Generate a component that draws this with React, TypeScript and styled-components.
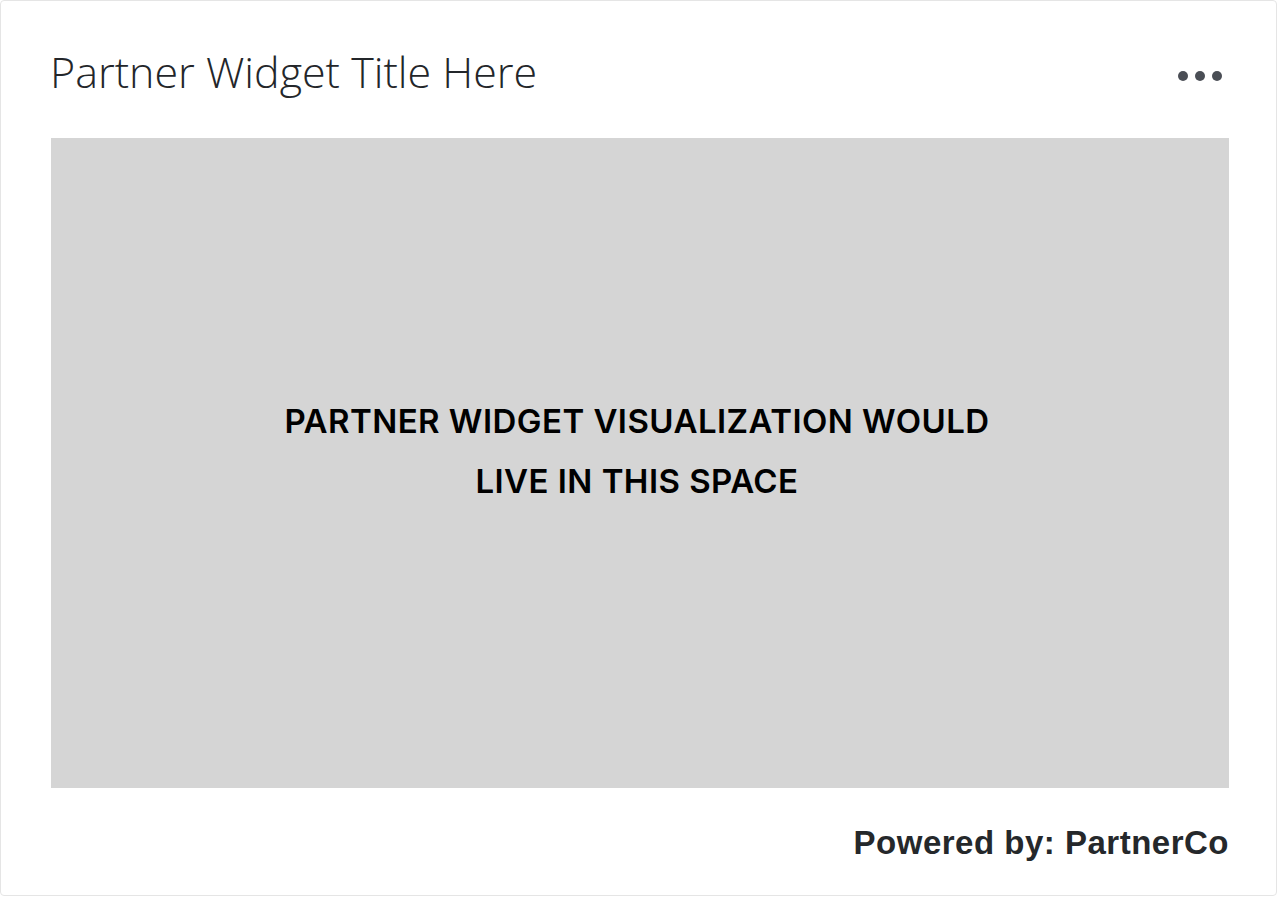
import React from "react";
import styled, { createGlobalStyle } from "styled-components";

const GlobalStyle = createGlobalStyle`
  html, body {
    margin: 0;
    padding: 0;
    background: #ffffff;
  }
  body {
    font-family: "Open Sans", "Liberation Sans", Arial, sans-serif;
  }
  * { box-sizing: border-box; }
`;

const Card = styled.section`
  width: 1277px;
  height: 896px;
  border: 1px solid #e5e5e5;
  border-radius: 4px;
  background: #ffffff;
  padding: 0 47px 0 50px;
  display: flex;
  flex-direction: column;
`;

const Header = styled.header`
  height: 137px;
  display: flex;
  align-items: center;
  justify-content: space-between;
  padding-top: 13px;
`;

const Title = styled.h2`
  margin: 0 0 9px -1px;
  font-family: "Open Sans", "Liberation Sans", sans-serif;
  font-weight: 300;
  font-size: 43px;
  color: #23262a;
`;

const MoreButton = styled.button`
  border: none;
  background: transparent;
  padding: 0;
  margin-right: 7px;
  display: flex;
  gap: 7px;
  cursor: pointer;
`;

const Dot = styled.span`
  width: 10px;
  height: 10px;
  border-radius: 50%;
  background: #4a4e55;
`;

const Visual = styled.div`
  height: 650px;
  background: #d5d5d5;
  display: flex;
  align-items: center;
  justify-content: center;
  padding: 0 6px 24px 0;
`;

const Placeholder = styled.p`
  margin: 0;
  text-align: center;
  font-family: "Inter", "Liberation Sans", sans-serif;
  font-weight: 600;
  font-size: 33px;
  letter-spacing: 0.45px;
  line-height: 60px;
  color: #000000;
  text-transform: uppercase;
`;

const Footer = styled.footer`
  flex: 1;
  display: flex;
  justify-content: flex-end;
  align-items: center;
  padding-top: 2px;
`;

const Powered = styled.span`
  font-family: "Liberation Sans", Arial, sans-serif;
  font-weight: 700;
  font-size: 33px;
  letter-spacing: 0.5px;
  color: #25282b;
`;

export default function App() {
  return (
    <>
      <GlobalStyle />
      <Card>
        <Header>
          <Title>Partner Widget Title Here</Title>
          <MoreButton aria-label="More">
            <Dot />
            <Dot />
            <Dot />
          </MoreButton>
        </Header>
        <Visual>
          <Placeholder>
            Partner widget visualization would
            <br />
            live in this space
          </Placeholder>
        </Visual>
        <Footer>
          <Powered>Powered by: PartnerCo</Powered>
        </Footer>
      </Card>
    </>
  );
}
